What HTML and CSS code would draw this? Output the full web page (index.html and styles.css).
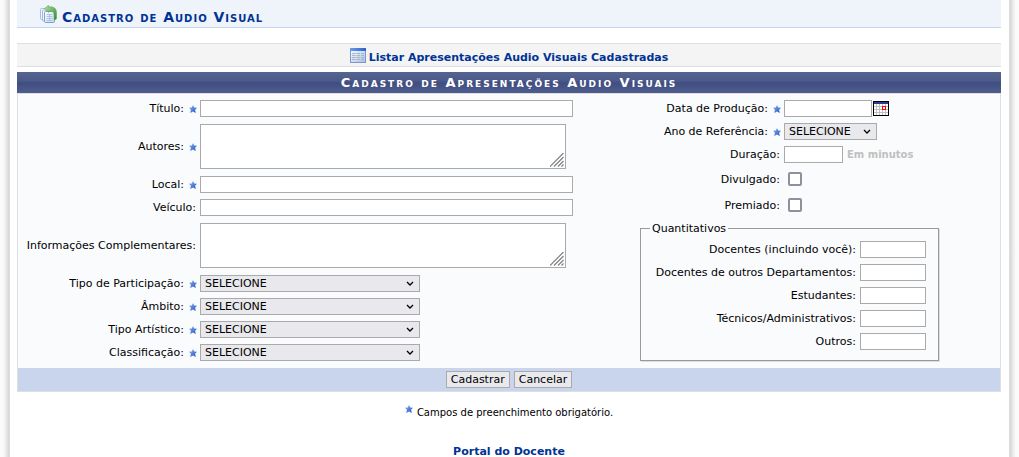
FILE: index.html
```html
<!DOCTYPE html>
<html lang="pt-BR">
<head>
<meta charset="utf-8">
<title>Cadastro de Audio Visual</title>
<link rel="stylesheet" href="styles.css">
</head>
<body>
<svg class="defs" aria-hidden="true">
  <defs>
    <linearGradient id="gradStar" x1="0" y1="0" x2="1" y2="1"><stop offset="0" stop-color="#8fb8f4"/><stop offset="1" stop-color="#1c4cc0"/></linearGradient>
    <linearGradient id="gradPage" x1="0" y1="0" x2="1" y2="1"><stop offset="0" stop-color="#ffffff"/><stop offset="1" stop-color="#c4d8f2"/></linearGradient>
    <linearGradient id="gradArrow" x1="0" y1="0" x2="1" y2="1"><stop offset="0" stop-color="#b4e2a0"/><stop offset="1" stop-color="#2f8a2c"/></linearGradient>
    <linearGradient id="gradBar" x1="0" y1="0" x2="1" y2="0"><stop offset="0" stop-color="#6a9cf0"/><stop offset="1" stop-color="#2a62cc"/></linearGradient>
    <linearGradient id="gradSheet" x1="0" y1="0" x2="1" y2="1"><stop offset="0" stop-color="#ffffff"/><stop offset="1" stop-color="#a9bfe4"/></linearGradient>
    <symbol id="star" viewBox="0 0 8 8"><path fill="url(#gradStar)" d="M4 0 5.200 2.600 8 2.700 6.100 4.700 6.800 8 4 6.500 1.200 8 1.900 4.700 0 2.700 2.800 2.600z"/></symbol>
  </defs>
</svg>
<div class="page">
  <h1 class="heading">
    <svg class="heading-icon" viewBox="0 0 17 18" aria-hidden="true">
      <rect x=".5" y="3.500" width="10" height="11" rx="1" fill="#f4f8fe" stroke="#a4bfe6"/>
      <rect x="2.500" y="5" width="10" height="11" rx="1" fill="#f4f8fe" stroke="#9ab8e2"/>
      <rect x="4.500" y="6.500" width="10" height="11" rx="1" fill="url(#gradPage)" stroke="#7f9fd0"/>
      <path d="M6.500 9.500h6M6.500 11.500h6M6.500 13.500h6M6.500 15.500h6M9.500 9v7" stroke="#a4bde2" stroke-width=".8"/>
      <path d="M4.500 3.500 8.500 .3v1.600c5.500-.4 8 1.600 8 6v5.600c0 .8-1.400 1.400-2.500 1.400V9.500C14 6.800 12 5.800 8.500 6v1.500z" fill="url(#gradArrow)" stroke="#5ba94e" stroke-width=".6"/>
    </svg>
    Cadastro de Audio Visual
  </h1>

  <div class="toolbar">
    <a class="toolbar-link" href="#listar">
      <svg class="toolbar-icon" viewBox="0 0 16 15" aria-hidden="true">
        <rect x=".5" y=".5" width="15" height="14" fill="url(#gradSheet)" stroke="#7c97c8"/>
        <path d="M0 0h16v3H0z" fill="url(#gradBar)"/>
        <path d="M2 5.500h3.500M6.500 5.500H10M11 5.500h3M2 7.500h3.500M6.500 7.500H10M11 7.500h3M2 9.500h3.500M6.500 9.500H10M11 9.500h3M2 11.500h3.500M6.500 11.500H10M11 11.500h3" stroke="#a3b6cc"/>
      </svg>
      Listar Apresentações Audio Visuais Cadastradas
    </a>
  </div>

  <form class="form">
    <h2 class="caption">Cadastro de Apresentações Audio Visuais</h2>
    <div class="columns">
      <div class="fields fields-main">
        <label for="titulo">Título: <svg class="star"><use href="#star"/></svg></label>
        <input type="text" class="box wide" id="titulo">
        <label for="autores">Autores: <svg class="star"><use href="#star"/></svg></label>
        <textarea class="box area" id="autores"></textarea>
        <label for="local">Local: <svg class="star"><use href="#star"/></svg></label>
        <input type="text" class="box wide" id="local">
        <label for="veiculo">Veículo:</label>
        <input type="text" class="box wide" id="veiculo">
        <label for="info">Informações Complementares:</label>
        <textarea class="box area" id="info"></textarea>
        <label for="participacao">Tipo de Participação: <svg class="star"><use href="#star"/></svg></label>
        <select class="box choice" id="participacao"><option>SELECIONE</option></select>
        <label for="ambito">Âmbito: <svg class="star"><use href="#star"/></svg></label>
        <select class="box choice" id="ambito"><option>SELECIONE</option></select>
        <label for="artistico">Tipo Artístico: <svg class="star"><use href="#star"/></svg></label>
        <select class="box choice" id="artistico"><option>SELECIONE</option></select>
        <label for="classificacao">Classificação: <svg class="star"><use href="#star"/></svg></label>
        <select class="box choice" id="classificacao"><option>SELECIONE</option></select>
      </div>

      <div class="fields fields-side">
        <label for="data">Data de Produção: <svg class="star"><use href="#star"/></svg></label>
        <div class="inline tight">
          <input type="text" class="box date" id="data">
          <button type="button" class="calendar" aria-label="Calendário">
            <svg viewBox="0 0 16 15" aria-hidden="true" shape-rendering="crispEdges">
              <path d="M0 0h16v15H0z" fill="#000"/>
              <path d="M1 1h14v2H1z" fill="#27408b"/>
              <path d="M1 3h14v11H1z" fill="#c0c0c0"/>
              <path d="M1 3h2v2H1zM4 3h2v2H4zM7 3h2v2H7zM10 3h2v2h-2zM13 3h2v2h-2zM1 6h2v2H1zM4 6h2v2H4zM7 6h2v2H7zM13 6h2v2h-2zM1 9h2v2H1zM4 9h2v2H4zM7 9h2v2H7zM10 9h2v2h-2zM13 9h2v2h-2zM1 12h2v2H1zM4 12h2v2H4zM7 12h2v2H7zM10 12h2v2h-2zM13 12h2v2h-2z" fill="#fff"/>
              <path d="M9 5h4v4H9z" fill="#f00"/>
              <path d="M10 6h2v2h-2z" fill="#fff"/>
            </svg>
          </button>
        </div>
        <label for="ano">Ano de Referência: <svg class="star"><use href="#star"/></svg></label>
        <select class="box year" id="ano"><option>SELECIONE</option></select>
        <label for="duracao">Duração:</label>
        <div class="inline">
          <input type="text" class="box minutes" id="duracao">
          <span class="hint">Em minutos</span>
        </div>
        <label class="check-row" for="divulgado">Divulgado:</label>
        <input type="checkbox" class="check" id="divulgado">
        <label class="check-row" for="premiado">Premiado:</label>
        <input type="checkbox" class="check" id="premiado">
        <fieldset class="group">
          <legend>Quantitativos</legend>
          <div class="fields counts">
            <label for="docentes">Docentes (incluindo você):</label>
            <input type="text" class="box" id="docentes">
            <label for="outros-dep">Docentes de outros Departamentos:</label>
            <input type="text" class="box" id="outros-dep">
            <label for="estudantes">Estudantes:</label>
            <input type="text" class="box" id="estudantes">
            <label for="tecnicos">Técnicos/Administrativos:</label>
            <input type="text" class="box" id="tecnicos">
            <label for="outros">Outros:</label>
            <input type="text" class="box" id="outros">
          </div>
        </fieldset>
      </div>
    </div>
    <div class="actions">
      <button type="submit" class="action">Cadastrar</button>
      <button type="button" class="action">Cancelar</button>
    </div>
  </form>

  <p class="note"><svg class="star"><use href="#star"/></svg> Campos de preenchimento obrigatório.</p>
  <p class="portal"><a href="#portal">Portal do Docente</a></p>
</div>
</body>
</html>
```

FILE: styles.css
```css
* {
  box-sizing: border-box;
}

html {
  background:
    linear-gradient(to right, #fcfcfc 0, #f7f7f7 4px, #d6d6d6 9px, #e4e4e4 10px, transparent 10px) left / 10px 100% no-repeat,
    linear-gradient(to left, #fcfcfc 0, #f7f7f7 4px, #d6d6d6 9px, #e4e4e4 10px, transparent 10px) right / 10px 100% no-repeat,
    #fff;
}

body {
  margin: 0;
  font: 11px/15px Verdana, "DejaVu Sans", sans-serif;
  color: #000;
}

a {
  color: #003395;
  font-weight: bold;
  text-decoration: none;
}

.defs {
  position: absolute;
  width: 0;
  height: 0;
}

.page {
  min-height: 100vh;
  margin: 0 10px;
  padding: 0 8px 0 7px;
  background: #fff;
}

.heading {
  display: flex;
  align-items: flex-end;
  gap: 5px;
  height: 28px;
  margin: 0 0 15px;
  padding: 0 0 1px 23px;
  border-bottom: 1px solid #c8d5ec;
  background: #eff3fa;
  color: #003395;
  font-size: 14px;
  line-height: 18px;
  font-variant: small-caps;
  letter-spacing: 1px;
}

.heading-icon {
  flex: none;
  width: 17px;
  height: 18px;
  margin-bottom: 3px;
}

.toolbar {
  display: flex;
  justify-content: center;
  margin-bottom: 5px;
  padding: 4px 0 2px;
  border: 1px solid #dedfe3;
  border-width: 1px 0;
  background: #f4f4f4;
}

.toolbar-link {
  display: flex;
  align-items: flex-end;
  gap: 3px;
  height: 16px;
  line-height: 12px;
}

.toolbar-icon {
  width: 16px;
  height: 15px;
  align-self: flex-start;
}

.caption {
  margin: 0;
  background: linear-gradient(#56648f, #4c5a8c 40%, #404d80 52%, #4f5c8e);
  color: #fff;
  font-size: 13px;
  line-height: 21px;
  font-variant: small-caps;
  letter-spacing: 2px;
  text-align: center;
}

.columns {
  display: grid;
  grid-template-columns: 622fr 360fr;
  padding: 6px 0 7px;
  border: 1px solid #dedfe3;
  border-bottom: 0;
  background: #fafbfd;
}

.fields {
  display: grid;
  align-content: start;
  align-items: center;
  justify-items: start;
  gap: 6px 4px;
}

.fields-main {
  grid-template-columns: 178px 1fr;
}

.fields-side {
  grid-template-columns: 140px 1fr;
}

.fields label {
  display: flex;
  align-items: center;
  justify-self: end;
  gap: 5px;
  white-space: nowrap;
}

.star {
  flex: none;
  width: 8px;
  height: 8px;
}

.fields .star {
  margin-right: -1px;
}

.box {
  width: 66px;
  height: 17px;
  margin: 0;
  padding: 0 4px;
  border: 1px solid #aaa;
  border-radius: 0;
  background: #fff;
  color: #000;
  font: inherit;
}

.wide {
  width: 373px;
}

.area {
  width: 366px;
  height: 45px;
  margin: 1px 0;
  overflow: auto;
  resize: both;
}

.area::-webkit-resizer {
  background: url("data:image/svg+xml,%3Csvg xmlns='http://www.w3.org/2000/svg' width='15' height='15'%3E%3Cpath d='M0 13.500 13.500 0M4 13.500 13.500 4M8 13.500 13.500 8M11.500 13.500 13.500 11.500' stroke='%23808080' stroke-width='1.200'/%3E%3C/svg%3E") no-repeat right bottom;
}

select.box {
  appearance: none;
  background: #e9e9ed url("data:image/svg+xml,%3Csvg xmlns='http://www.w3.org/2000/svg' width='8' height='5'%3E%3Cpath d='M1 1 4 4 7 1' fill='none' stroke='%23000' stroke-width='1.300'/%3E%3C/svg%3E") no-repeat right 5px center;
}

.choice {
  width: 220px;
}

select.year {
  width: 93px;
}

.inline {
  display: flex;
  align-items: center;
  gap: 4px;
}

.tight {
  gap: 1px;
}

.date {
  width: 88px;
}

.minutes {
  width: 59px;
}

.calendar {
  display: flex;
  width: 16px;
  padding: 0;
  border: 0;
  background: none;
}

.calendar svg {
  width: 16px;
  height: 15px;
}

.hint {
  color: #c0c0c0;
  font-size: 10px;
  font-weight: bold;
}

.check-row {
  height: 20px;
}

.check {
  appearance: none;
  width: 14px;
  height: 14px;
  margin: 0 4px;
  border: 2px solid #8f8f9d;
  border-radius: 2px;
  background: #fff;
}

.group {
  grid-column: 1 / -1;
  width: 299px;
  margin: 0;
  padding: 5px 12px 10px 9px;
  border: 1px solid #999;
  box-shadow: 1px 1px 0 #ddd;
}

.group legend {
  padding: 0 2px;
}

.counts {
  grid-template-columns: auto auto;
  justify-content: end;
}

.actions {
  display: flex;
  justify-content: center;
  gap: 4px;
  padding: 3px 0;
  border: 1px solid #dedfe3;
  border-top: 0;
  background: #c8d5ec;
}

.action {
  height: 17px;
  padding: 0 4px;
  border: 1px solid #aaa;
  background: #e9e9ed;
  color: #000;
  font: inherit;
}

.note {
  display: flex;
  justify-content: center;
  gap: 4px;
  margin: 13px 0 0;
  font-size: 10px;
}

.portal {
  margin: 26px 0 0;
  line-height: 12px;
  text-align: center;
}
```
